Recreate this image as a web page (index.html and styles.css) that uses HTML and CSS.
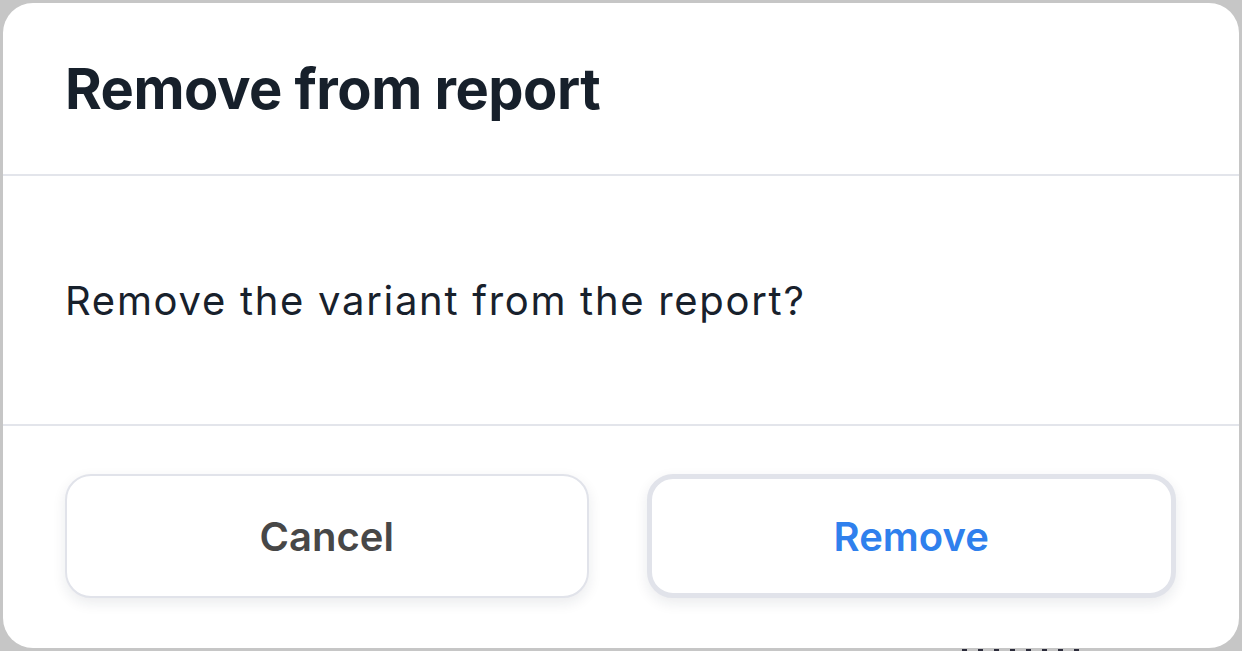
FILE: index.html
```html
<!DOCTYPE html>
<html>
<head>
<meta charset="utf-8">
<link rel="stylesheet" href="styles.css">
</head>
<body>
<div class="backdrop">
  <div class="modal">
    <div class="modal-header">
      <h1 class="title">Remove from report</h1>
    </div>
    <div class="modal-body">
      <p class="message">Remove the variant from the report?</p>
    </div>
    <div class="modal-footer">
      <button class="btn btn-cancel">Cancel</button>
      <button class="btn btn-remove">Remove</button>
    </div>
  </div>
  <div class="behind-marks"></div>
</div>
</body>
</html>
```
FILE: styles.css
```css
html, body {
  margin: 0;
  padding: 0;
  width: 1242px;
  height: 651px;
  overflow: hidden;
  background: #c6c6c6;
  font-family: Inter, "Noto Sans", sans-serif;
}
.backdrop {
  position: relative;
  width: 1242px;
  height: 651px;
  padding: 3px;
  box-sizing: border-box;
}
.modal {
  width: 1236px;
  height: 645px;
  background: #ffffff;
  border-radius: 30px;
  display: flex;
  flex-direction: column;
  overflow: hidden;
}
.modal-header {
  height: 171px;
  flex: none;
  display: flex;
  align-items: center;
  padding: 0 62px;
  border-bottom: 2px solid #e3e5eb;
}
.title {
  margin: 0;
  font-size: 56px;
  font-weight: 700;
  color: #17202b;
  letter-spacing: -0.5px;
}
.modal-body {
  height: 248px;
  flex: none;
  display: flex;
  align-items: center;
  padding: 0 62px;
  border-bottom: 2px solid #e3e5eb;
}
.message {
  margin: 0;
  font-size: 40px;
  font-weight: 400;
  color: #18212c;
  letter-spacing: 1.7px;
}
.modal-footer {
  flex: 1;
  display: flex;
  gap: 58px;
  padding: 48px 63px 0 62px;
}
.btn {
  flex: 1;
  height: 124px;
  background: #ffffff;
  border-radius: 26px;
  font-family: Inter, "Noto Sans", sans-serif;
  font-size: 40px;
  font-weight: 600;
  cursor: pointer;
  box-shadow: 0 5px 14px rgba(20, 30, 60, 0.09);
}
.btn-cancel {
  border: 2px solid #e1e3ea;
  color: #474747;
}
.btn-remove {
  border: 5px solid #e1e3ea;
  color: #2f80ed;
}
.behind-marks {
  position: absolute;
  left: 962px;
  top: 649px;
  width: 126px;
  height: 2px;
  background: repeating-linear-gradient(90deg, #2b2b3a 0 5px, transparent 5px 16px);
}
```
